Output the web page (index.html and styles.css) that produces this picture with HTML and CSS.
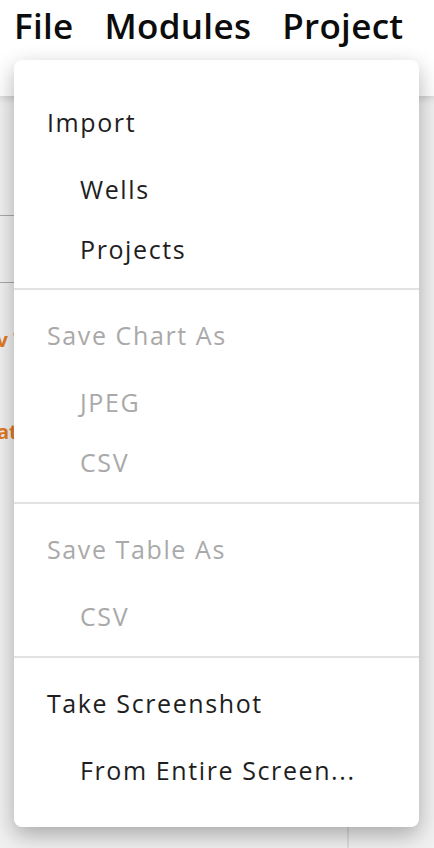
FILE: index.html
```html
<!DOCTYPE html>
<html lang="en">
<head>
<meta charset="utf-8">
<title>File menu</title>
<link rel="stylesheet" href="styles.css">
</head>
<body>
<div class="app">
  <header class="topbar">
    <span class="top-item">File</span>
    <span class="top-item">Modules</span>
    <span class="top-item">Project</span>
  </header>
  <main class="content">
    <aside class="side">
      <div class="side-cell cell-a"></div>
      <div class="side-cell cell-b"></div>
      <div class="side-text t1"><span>Dev Tools</span></div>
      <div class="side-text t2"><span>Data Format</span></div>
    </aside>
    <div class="panel">
      <div class="panel-main"></div>
      <div class="panel-divider"></div>
      <div class="panel-side"></div>
    </div>
  </main>
  <nav class="menu">
    <div class="menu-section">
      <div class="menu-head">Import</div>
      <div class="menu-item">Wells</div>
      <div class="menu-item">Projects</div>
    </div>
    <div class="menu-section disabled">
      <div class="menu-head">Save Chart As</div>
      <div class="menu-item">JPEG</div>
      <div class="menu-item">CSV</div>
    </div>
    <div class="menu-section disabled">
      <div class="menu-head">Save Table As</div>
      <div class="menu-item">CSV</div>
    </div>
    <div class="menu-section">
      <div class="menu-head">Take Screenshot</div>
      <div class="menu-item">From Entire Screen...</div>
    </div>
  </nav>
</div>
</body>
</html>
```
FILE: styles.css
```css
html, body {
  margin: 0;
  padding: 0;
}
body {
  font-family: "Open Sans", "Noto Sans", sans-serif;
  background: #f1f1f1;
}
.app {
  position: relative;
  width: 434px;
  height: 848px;
  overflow: hidden;
  display: flex;
  flex-direction: column;
}
.topbar {
  position: relative;
  z-index: 1;
  height: 96px;
  box-sizing: border-box;
  flex-shrink: 0;
  background: #ffffff;
  box-shadow: 0 2px 8px rgba(0, 0, 0, 0.16);
  display: flex;
  gap: 31px;
  padding: 6px 0 0 14px;
  font-size: 35px;
  line-height: 40px;
  letter-spacing: 0.3px;
  font-weight: 600;
  color: #0c0c0c;
}
.content {
  flex: 1;
  display: flex;
  background: #f1f1f1;
}
.side {
  width: 14px;
  flex-shrink: 0;
  display: flex;
  flex-direction: column;
}
.side-cell {
  border-bottom: 1px solid #a9a9a9;
}
.cell-a { height: 119px; }
.cell-b { height: 66px; }
.side-text {
  display: flex;
  overflow: hidden;
  white-space: nowrap;
  color: #e07a24;
  font-weight: 700;
  font-size: 20px;
  line-height: 30px;
}
.side-text span {
  flex-shrink: 0;
}
.t1 { margin-top: 42px; margin-left: -30px; }
.t2 { margin-top: 62px; margin-left: -108px; }
.panel {
  flex: 1;
  display: grid;
  grid-template-columns: 333px 2px 1fr;
}
.panel-divider {
  background: #dddddd;
}
.menu {
  position: absolute;
  z-index: 2;
  left: 14px;
  top: 60px;
  width: 405px;
  box-sizing: border-box;
  padding: 17px 0 17px;
  background: #ffffff;
  border-radius: 8px;
  box-shadow: 0 8px 22px rgba(0, 0, 0, 0.3);
  font-size: 25px;
  letter-spacing: 1.6px;
  color: #1e1e1e;
}
.menu-section {
  padding: 15px 0 10px;
}
.menu-section:first-child {
  padding-bottom: 9px;
}
.menu-section + .menu-section {
  border-top: 2px solid #e2e2e2;
}
.menu-head {
  height: 60px;
  line-height: 60px;
  padding-left: 33px;
  margin-bottom: 7px;
}
.menu-item {
  height: 60px;
  line-height: 60px;
  padding-left: 66px;
}
.disabled {
  color: #a9a9a9;
}
```
